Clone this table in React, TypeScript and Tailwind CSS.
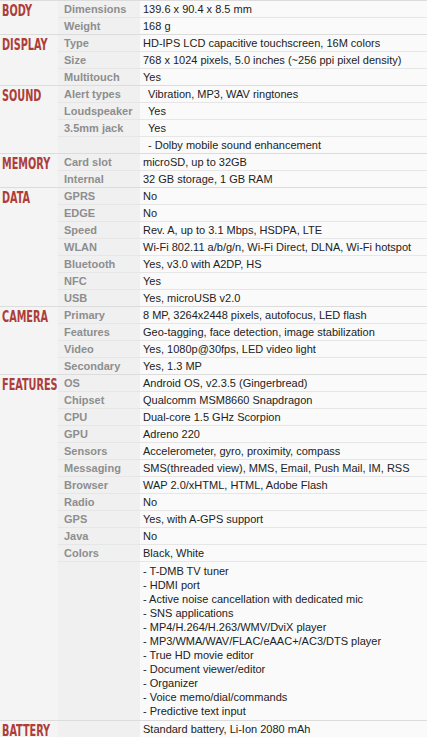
import React from "react";

type Row = [string, string, boolean?];
type Section = { title: string; rows: Row[]; extra?: string[] };

const sections: Section[] = [
  { title: "BODY", rows: [["Dimensions", "139.6 x 90.4 x 8.5 mm"], ["Weight", "168 g"]] },
  {
    title: "DISPLAY",
    rows: [
      ["Type", "HD-IPS LCD capacitive touchscreen, 16M colors"],
      ["Size", "768 x 1024 pixels, 5.0 inches (~256 ppi pixel density)"],
      ["Multitouch", "Yes"],
    ],
  },
  {
    title: "SOUND",
    rows: [
      ["Alert types", "Vibration, MP3, WAV ringtones", true],
      ["Loudspeaker", "Yes", true],
      ["3.5mm jack", "Yes", true],
      ["", "- Dolby mobile sound enhancement", true],
    ],
  },
  { title: "MEMORY", rows: [["Card slot", "microSD, up to 32GB"], ["Internal", "32 GB storage, 1 GB RAM"]] },
  {
    title: "DATA",
    rows: [
      ["GPRS", "No"],
      ["EDGE", "No"],
      ["Speed", "Rev. A, up to 3.1 Mbps, HSDPA, LTE"],
      ["WLAN", "Wi-Fi 802.11 a/b/g/n, Wi-Fi Direct, DLNA, Wi-Fi hotspot"],
      ["Bluetooth", "Yes, v3.0 with A2DP, HS"],
      ["NFC", "Yes"],
      ["USB", "Yes, microUSB v2.0"],
    ],
  },
  {
    title: "CAMERA",
    rows: [
      ["Primary", "8 MP, 3264x2448 pixels, autofocus, LED flash"],
      ["Features", "Geo-tagging, face detection, image stabilization"],
      ["Video", "Yes, 1080p@30fps, LED video light"],
      ["Secondary", "Yes, 1.3 MP"],
    ],
  },
  {
    title: "FEATURES",
    rows: [
      ["OS", "Android OS, v2.3.5 (Gingerbread)"],
      ["Chipset", "Qualcomm MSM8660 Snapdragon"],
      ["CPU", "Dual-core 1.5 GHz Scorpion"],
      ["GPU", "Adreno 220"],
      ["Sensors", "Accelerometer, gyro, proximity, compass"],
      ["Messaging", "SMS(threaded view), MMS, Email, Push Mail, IM, RSS"],
      ["Browser", "WAP 2.0/xHTML, HTML, Adobe Flash"],
      ["Radio", "No"],
      ["GPS", "Yes, with A-GPS support"],
      ["Java", "No"],
      ["Colors", "Black, White"],
    ],
    extra: [
      "- T-DMB TV tuner",
      "- HDMI port",
      "- Active noise cancellation with dedicated mic",
      "- SNS applications",
      "- MP4/H.264/H.263/WMV/DviX player",
      "- MP3/WMA/WAV/FLAC/eAAC+/AC3/DTS player",
      "- True HD movie editor",
      "- Document viewer/editor",
      "- Organizer",
      "- Voice memo/dial/commands",
      "- Predictive text input",
    ],
  },
  { title: "BATTERY", rows: [["", "Standard battery, Li-Ion 2080 mAh"]] },
];

const titleFont = {
  fontFamily: '"DejaVu Sans Condensed", "Liberation Sans Narrow", sans-serif',
};

export default function App() {
  return (
    <div
      className="w-[427px] h-[739px] bg-white overflow-hidden text-[11px] text-[#222]"
      style={{ fontFamily: '"Liberation Sans", Arial, sans-serif' }}
    >
      {sections.map((s, si) => (
        <div key={si} className="flex border-t border-[#dcdcdc]">
          <div className="w-[58px] shrink-0 bg-[#f4f4f4] pl-[2px] pt-[3px]">
            <div
              className="h-[12px] leading-[15px] text-[15px] font-bold text-[#ad3d38] origin-left scale-x-[0.72] whitespace-nowrap"
              style={titleFont}
            >
              {s.title}
            </div>
          </div>
          <div className="flex-1 flex flex-col">
            {s.rows.map((r, ri) => (
              <div
                key={ri}
                className={"flex " + (ri > 0 ? "h-[17px] border-t border-[#e6e6e6]" : "h-[16px]")}
              >
                <div className="w-[82px] shrink-0 bg-[#f0f0f0] pl-[6px] font-bold text-[#8e8e8e] leading-[16px] whitespace-nowrap">
                  {r[0]}
                </div>
                <div
                  className={
                    "flex-1 bg-[#fafafa] leading-[16px] whitespace-nowrap " + (r[2] ? "pl-[8px]" : "pl-[3px]")
                  }
                >
                  {r[1]}
                </div>
              </div>
            ))}
            {s.extra && (
              <div className="flex border-t border-[#e6e6e6]">
                <div className="w-[82px] shrink-0 bg-[#f0f0f0]" />
                <div className="flex-1 bg-[#fafafa] pl-[3px] pt-[2px] pb-[2px] leading-[14px]">
                  {s.extra.map((e, ei) => (
                    <div key={ei} className="whitespace-nowrap">
                      {e}
                    </div>
                  ))}
                </div>
              </div>
            )}
          </div>
        </div>
      ))}
    </div>
  );
}
